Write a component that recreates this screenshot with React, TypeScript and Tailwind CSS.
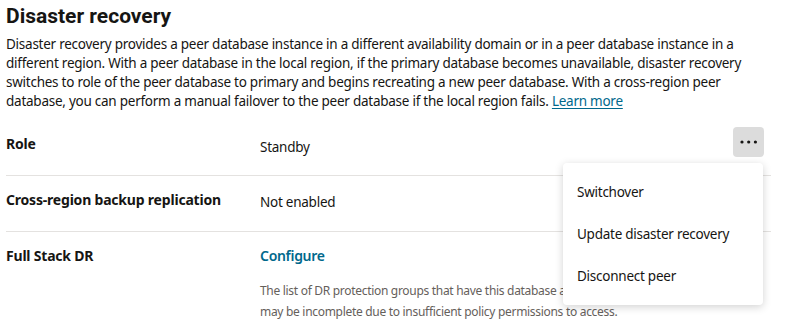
const font = { fontFamily: '"Noto Sans", "Open Sans", sans-serif' };

const Row = ({ label, children, last }: { label: string; children: React.ReactNode; last?: boolean }) => (
  <div className={`flex pt-[14px] ${last ? "" : "h-[56px] border-b border-[#e4e2e0]"}`}>
    <div className="w-[254px] shrink-0 text-[14px] leading-[20px] font-bold tracking-[-0.2px]">{label}</div>
    <div className="flex-1">{children}</div>
  </div>
);

const Dots = () => (
  <svg width="18" height="4" viewBox="0 0 18 4" fill="#161513">
    <circle cx="2" cy="2" r="1.6" />
    <circle cx="8.7" cy="2" r="1.6" />
    <circle cx="15.4" cy="2" r="1.6" />
  </svg>
);

export default function App() {
  return (
    <div className="relative h-[329px] w-[791px] overflow-hidden bg-white px-[6px] text-[#161513]" style={font}>
      <h1 className="pt-[3px] font-['Roboto',sans-serif] text-[21px] leading-[26px] font-bold">Disaster recovery</h1>
      <p className="mt-[6px] text-[13.5px] leading-[19px] tracking-[-0.25px] whitespace-nowrap">
        Disaster recovery provides a peer database instance in a different availability domain or in a peer database instance in a
        <br />
        different region. With a peer database in the local region, if the primary database becomes unavailable, disaster recovery
        <br />
        switches to role of the peer database to primary and begins recreating a new peer database. With a cross-region peer
        <br />
        database, you can perform a manual failover to the peer database if the local region fails.{" "}
        <a className="text-[#00688c] underline underline-offset-2">Learn more</a>
      </p>

      <div className="mt-[9px] w-[765px]">
        <Row label="Role">
          <div className="flex items-start justify-between pr-[7px]">
            <span className="mt-[3px] text-[13.5px] leading-[20px] tracking-[-0.25px]">Standby</span>
            <button className="-mt-[7px] flex h-[30px] w-[31px] items-center justify-center rounded-[4px] bg-[#dcdcdc]">
              <Dots />
            </button>
          </div>
        </Row>
        <Row label="Cross-region backup replication">
          <span className="mt-[2px] block text-[13.5px] leading-[20px] tracking-[-0.25px]">Not enabled</span>
        </Row>
        <Row label="Full Stack DR" last>
          <span className="block text-[14px] leading-[20px] font-semibold tracking-[-0.3px] text-[#00688c]">Configure</span>
          <p className="mt-[15px] text-[12px] leading-[20.5px] tracking-[-0.3px] whitespace-nowrap text-[#65605b]">
            The list of DR protection groups that have this database as a member
            <br />
            may be incomplete due to insufficient policy permissions to access.
          </p>
        </Row>
      </div>

      <div className="absolute top-[163px] left-[563px] w-[200px] rounded-[4px] bg-white py-[8px] shadow-[0_2px_8px_rgba(0,0,0,0.18)]">
        {["Switchover", "Update disaster recovery", "Disconnect peer"].map((item) => (
          <div key={item} className="flex h-[42px] items-center px-[14px] text-[13.5px] tracking-[-0.25px]">
            {item}
          </div>
        ))}
      </div>
    </div>
  );
}
